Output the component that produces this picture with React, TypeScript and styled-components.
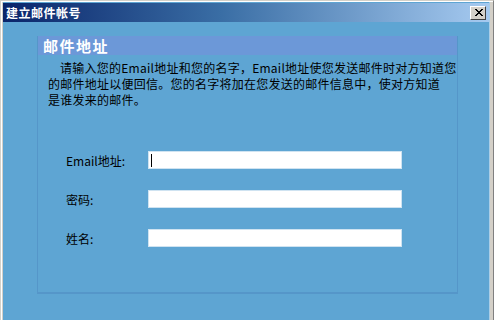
import React from 'react';
import styled, { createGlobalStyle } from 'styled-components';

const cjk = `"SimSun", "Noto Sans CJK SC", "Liberation Sans", sans-serif`;

const GlobalStyle = createGlobalStyle`
  html, body {
    margin: 0;
    padding: 0;
    background: #5ea5d3;
  }
`;

const Window = styled.div`
  width: 494px;
  height: 320px;
  box-sizing: border-box;
  background: #5ea5d3;
  border-top: 1px solid #d4d0c8;
  border-left: 1px solid #d4d0c8;
  border-right: 1px solid #808080;
  box-shadow: inset 1px 1px 0 #ffffff, inset 2px 1px 0 #d4d0c8, inset -1px 0 0 #d4d0c8,
    inset -3px 0 0 #d4d0c8, inset -4px 0 0 #a9cde6;
  padding: 1px 4px 0 2px;
  display: flex;
  flex-direction: column;
  font-family: ${cjk};
  overflow: hidden;
`;

const TitleBar = styled.div`
  height: 19px;
  margin-top: 1px;
  display: flex;
  align-items: center;
  justify-content: space-between;
  padding: 0 3px 0 3px;
  background: linear-gradient(to right, #0a246a 0%, #3a6ea5 45%, #a6caf0 100%);
`;

const Title = styled.span`
  color: #ffffff;
  font-size: 12px;
  font-weight: bold;
  letter-spacing: 0.5px;
`;

const CloseButton = styled.div`
  width: 16px;
  height: 14px;
  box-sizing: border-box;
  background: #d4d0c8;
  border-top: 1px solid #ffffff;
  border-left: 1px solid #ffffff;
  border-right: 1px solid #404040;
  border-bottom: 1px solid #404040;
  display: flex;
  align-items: center;
  justify-content: center;
`;

const Body = styled.div`
  flex: 1;
  padding: 14px 0 0 34px;
`;

const Panel = styled.div`
  width: 421px;
  height: 258px;
  box-sizing: border-box;
  border-left: 1px solid #5596c9;
  border-right: 1px solid #5596c9;
  border-bottom: 2px solid #5596c9;
  display: flex;
  flex-direction: column;
`;

const Header = styled.div`
  height: 19px;
  background: #6c98d8;
  color: #ffffff;
  font-size: 15px;
  font-weight: bold;
  line-height: 19px;
  padding-left: 5px;
  letter-spacing: 1.5px;
`;

const Intro = styled.div`
  padding: 5px 0 0 10px;
  font-size: 12px;
  line-height: 16px;
  letter-spacing: 0.25px;
  color: #000000;
`;

const Line = styled.div<{ $indent?: boolean }>`
  white-space: nowrap;
  padding-left: ${({ $indent }) => ($indent ? '12px' : '0')};
`;

const Form = styled.div`
  margin-top: 43px;
  display: grid;
  grid-template-columns: 82px 254px;
  row-gap: 21px;
  padding-left: 28px;
`;

const Label = styled.div`
  font-size: 12px;
  color: #000000;
  align-self: center;
`;

const Field = styled.div`
  height: 18px;
  box-sizing: border-box;
  background: #ffffff;
  border: 1px solid #cfe3f1;
  position: relative;
`;

const Caret = styled.span`
  position: absolute;
  left: 2px;
  top: 2px;
  width: 1px;
  height: 13px;
  background: #000000;
`;

const fields = [
  { label: 'Email地址:', focused: true },
  { label: '密码:', focused: false },
  { label: '姓名:', focused: false },
];

export default function App() {
  return (
    <>
      <GlobalStyle />
      <Window>
        <TitleBar>
          <Title>建立邮件帐号</Title>
          <CloseButton>
            <svg width="9" height="8" viewBox="0 0 9 8">
              <path d="M1 0 L8 7 M2 0 L9 7 M8 0 L1 7 M9 0 L2 7" stroke="#000" strokeWidth="1" />
            </svg>
          </CloseButton>
        </TitleBar>
        <Body>
          <Panel>
            <Header>邮件地址</Header>
            <Intro>
              <Line $indent>请输入您的Email地址和您的名字，Email地址使您发送邮件时对方知道您</Line>
              <Line>的邮件地址以便回信。您的名字将加在您发送的邮件信息中，使对方知道</Line>
              <Line>是谁发来的邮件。</Line>
            </Intro>
            <Form>
              {fields.map((f) => (
                <React.Fragment key={f.label}>
                  <Label>{f.label}</Label>
                  <Field>{f.focused && <Caret />}</Field>
                </React.Fragment>
              ))}
            </Form>
          </Panel>
        </Body>
      </Window>
    </>
  );
}
